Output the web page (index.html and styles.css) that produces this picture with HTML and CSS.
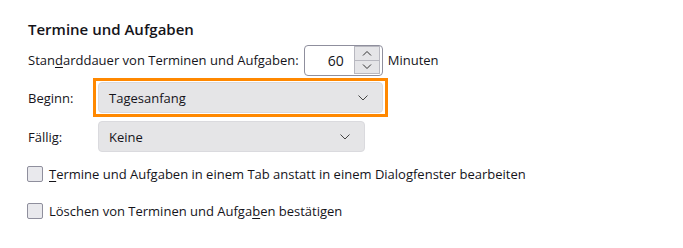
FILE: index.html
```html
<!DOCTYPE html>
<html lang="de">
<head>
  <meta charset="UTF-8" />
  <title>Termine und Aufgaben</title>
  <link rel="stylesheet" href="styles.css">
</head>
<body>

<section class="prefs">
  <h2>Termine und Aufgaben</h2>

  <div class="row duration">
    <label>Stan<u>d</u>arddauer von Terminen und Aufgaben:</label>
    <div class="number">
      <span class="value">60</span>
      <div class="spin">
        <span class="spin-btn">
          <svg width="10" height="6" viewBox="0 0 10 6"><path d="M1 5.5 L5 1.5 L9 5.5" fill="none" stroke="#333" stroke-width="1"/></svg>
        </span>
        <span class="spin-btn">
          <svg width="10" height="6" viewBox="0 0 10 6"><path d="M1 0.5 L5 4.5 L9 0.5" fill="none" stroke="#333" stroke-width="1"/></svg>
        </span>
      </div>
    </div>
    <span class="unit">Minuten</span>
  </div>

  <div class="row start">
    <label class="field-label">Beginn:</label>
    <div class="focus-ring">
      <div class="select wide">
        <span>Tagesanfang</span>
        <svg width="10" height="6" viewBox="0 0 10 6"><path d="M0.5 0.5 L5 5 L9.5 0.5" fill="none" stroke="#444" stroke-width="1"/></svg>
      </div>
    </div>
  </div>

  <div class="row due">
    <label class="field-label">Fällig:</label>
    <div class="select">
      <span>Keine</span>
      <svg width="10" height="6" viewBox="0 0 10 6"><path d="M0.5 0.5 L5 5 L9.5 0.5" fill="none" stroke="#444" stroke-width="1"/></svg>
    </div>
  </div>

  <div class="check">
    <span class="box"></span>
    <label><u>T</u>ermine und Aufgaben in einem Tab anstatt in einem Dialogfenster bearbeiten</label>
  </div>

  <div class="check">
    <span class="box"></span>
    <label>Löschen von Terminen und Aufga<u>b</u>en bestätigen</label>
  </div>
</section>

</body>
</html>
```

FILE: styles.css
```css
body {
  font-family: 'Open Sans', 'Noto Sans', sans-serif;
  font-size: 13px;
  color: #15141a;
  background-color: #ffffff;
  margin: 0;
  padding: 0;
}

.prefs {
  padding: 19px 0 0 28px;
}

h2 {
  font-size: 15px;
  font-weight: 600;
  line-height: 20px;
  margin: 0;
}

u {
  text-decoration-thickness: 1px;
  text-underline-offset: 2px;
}

.row {
  display: flex;
  align-items: center;
}

.duration {
  margin-top: 6px;
  height: 30px;
}

.number {
  display: flex;
  align-items: center;
  justify-content: flex-end;
  gap: 10px;
  box-sizing: border-box;
  width: 79px;
  height: 31px;
  margin-left: 5px;
  border: 1px solid #8f8f9d;
  border-radius: 4px;
  padding: 0 2px 0 0;
}

.number .value {
  font-size: 14px;
}

.spin {
  display: flex;
  flex-direction: column;
  width: 26px;
  height: 28px;
  border: 1px solid #b8b8c0;
  box-sizing: border-box;
}

.spin-btn {
  flex: 1;
  display: flex;
  align-items: center;
  justify-content: center;
  background-color: #e5e5e8;
}

.spin-btn + .spin-btn {
  border-top: 1px solid #b8b8c0;
}

.unit {
  margin-left: 5px;
}

.field-label {
  width: 65px;
}

.start {
  margin-top: 3px;
}

.due {
  margin-top: 4px;
}

.due .field-label {
  width: 70px;
}

.focus-ring {
  border: 3px solid #ff8800;
  padding: 1px 2px;
}

.select {
  display: flex;
  align-items: center;
  justify-content: space-between;
  box-sizing: border-box;
  width: 267px;
  height: 31px;
  padding: 0 14px 0 10px;
  background-color: #e5e5e7;
  border: 1px solid #dadade;
  border-radius: 4px;
}

.select.wide {
  width: 285px;
}

.check {
  display: flex;
  align-items: center;
  gap: 6px;
  margin-top: 12px;
  height: 20px;
}

.check + .check {
  margin-top: 17px;
}

.box {
  display: inline-block;
  box-sizing: border-box;
  width: 16px;
  height: 16px;
  margin-left: -1px;
  background-color: #e9e9ed;
  border: 1px solid #8f8f9d;
  border-radius: 2px;
}
```
